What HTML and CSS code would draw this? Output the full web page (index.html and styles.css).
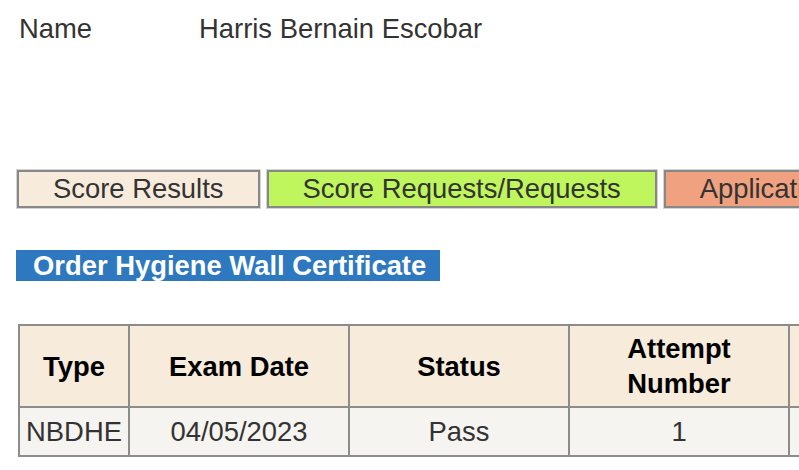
FILE: index.html
```html
<!DOCTYPE html>
<html>
<head>
<meta charset="utf-8">
<link rel="stylesheet" href="styles.css">
</head>
<body>
<div class="page">
  <div class="name-row">
    <span class="name-label">Name</span>
    <span class="name-value">Harris Bernain Escobar</span>
  </div>
  <div class="tabs">
    <span class="tab tab-results">Score Results</span>
    <span class="tab tab-requests">Score Requests/Requests</span>
    <span class="tab tab-apps">Applications</span>
  </div>
  <div class="order-row">
    <span class="order-link">Order Hygiene Wall Certificate</span>
  </div>
  <table class="results">
    <colgroup>
      <col class="c-type">
      <col class="c-wide">
      <col class="c-wide">
      <col class="c-wide">
      <col class="c-wide">
    </colgroup>
    <thead>
      <tr>
        <th>Type</th>
        <th>Exam Date</th>
        <th>Status</th>
        <th>Attempt<br>Number</th>
        <th>Score</th>
      </tr>
    </thead>
    <tbody>
      <tr>
        <td>NBDHE</td>
        <td>04/05/2023</td>
        <td>Pass</td>
        <td>1</td>
        <td>&nbsp;</td>
      </tr>
    </tbody>
  </table>
</div>
</body>
</html>
```

FILE: styles.css
```css
html, body {
  margin: 0;
  padding: 0;
  overflow: hidden;
  background: #ffffff;
}

.page {
  width: 1100px;
  font-family: "Liberation Sans", Arial, Helvetica, sans-serif;
  font-size: 27.4px;
  color: #333333;
}

.name-row {
  display: flex;
  padding-top: 13px;
  padding-left: 19px;
  line-height: 31px;
}

.name-label {
  width: 180px;
}

.tabs {
  display: flex;
  gap: 7px;
  margin-top: 126px;
  padding-left: 17px;
}

.tab {
  display: block;
  height: 34px;
  line-height: 34px;
  padding: 0 34px;
  border: 2px solid #888888;
  box-shadow: 0 0 0 1px #d4d4d4;
  color: #333333;
  white-space: nowrap;
}

.tab-results { background: #f7ebdc; }
.tab-requests { background: #bff55d; }
.tab-apps { background: #f0a17f; }

.order-row {
  margin-top: 42px;
  padding-left: 16px;
  height: 31px;
}

.order-link {
  display: inline-block;
  height: 31px;
  line-height: 31px;
  padding: 0 14px 0 17px;
  background: #2e78bf;
  color: #ffffff;
  font-weight: bold;
  white-space: nowrap;
}

.results {
  margin-top: 43px;
  margin-left: 18px;
  width: 992px;
  table-layout: fixed;
  border-collapse: separate;
  border-spacing: 0;
  border-top: 2px solid #8c8c8c;
  border-left: 2px solid #8c8c8c;
}

.c-type { width: 110px; }
.c-wide { width: 220px; }

.results th,
.results td {
  box-sizing: border-box;
  border-right: 2px solid #8c8c8c;
  border-bottom: 2px solid #8c8c8c;
  text-align: center;
  white-space: nowrap;
}

.results th {
  background: #f7ebdb;
  color: #000000;
  font-weight: bold;
  line-height: 35px;
  padding: 5px 4px 5px;
}

.results td {
  background: #f5f4f0;
  color: #333333;
  line-height: 36px;
  padding: 6px 4px 5px;
}
```
